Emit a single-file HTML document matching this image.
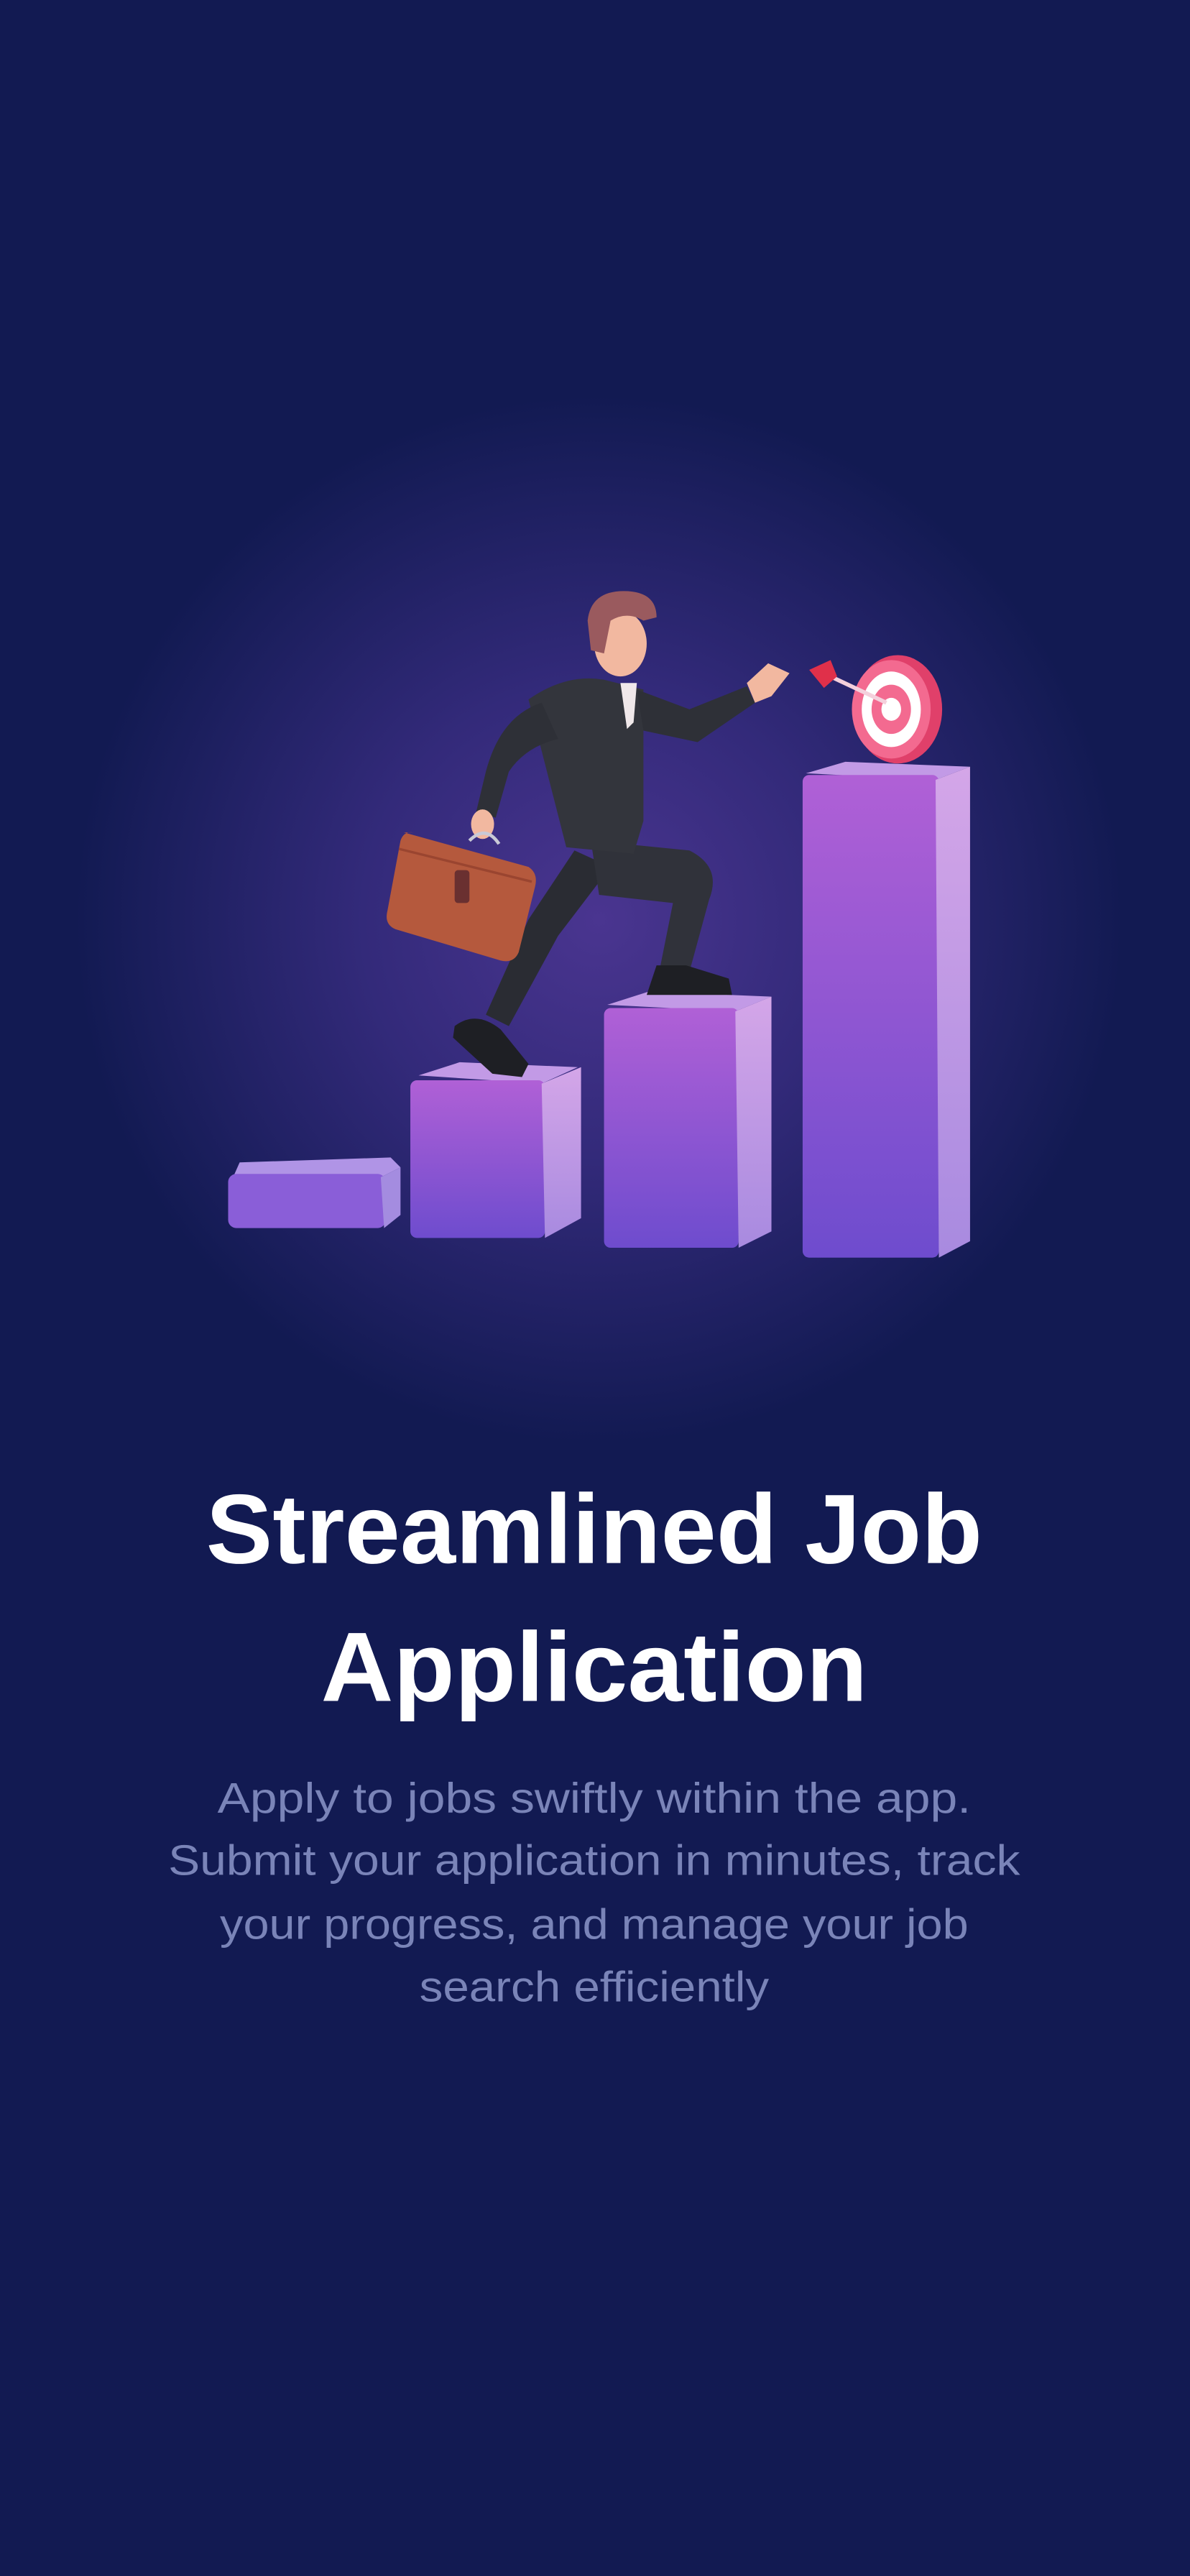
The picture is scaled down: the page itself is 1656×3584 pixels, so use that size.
<!DOCTYPE html>
<html><head><meta charset="utf-8"><style>
html,body{margin:0;padding:0;background:#121a52;}
svg{display:block}
</style></head><body>
<svg width="1656" height="3584" viewBox="0 0 725 1569" xmlns="http://www.w3.org/2000/svg">
<defs>
<radialGradient id="glow" cx="365" cy="560" r="320" gradientUnits="userSpaceOnUse">
<stop offset="0" stop-color="#4a3590"/>
<stop offset="0.45" stop-color="#332a7a"/>
<stop offset="1" stop-color="#121a52"/>
</radialGradient>
<linearGradient id="front" x1="0" y1="0" x2="0" y2="1">
<stop offset="0" stop-color="#b060d6"/><stop offset="1" stop-color="#6e4cce"/>
</linearGradient>
<linearGradient id="side" x1="0" y1="0" x2="0" y2="1">
<stop offset="0" stop-color="#d4a6e8"/><stop offset="1" stop-color="#a88ae0"/>
</linearGradient>
</defs>
<rect width="725" height="1569" fill="#121a52"/>
<circle cx="365" cy="560" r="320" fill="url(#glow)"/>
<!-- bar1 -->
<path d="M146 708 L238 705 L244 711 L232 717 L142 717 Z" fill="#b094e6"/>
<rect x="139" y="715" width="96" height="33" rx="5" fill="#8a5ed8"/>
<path d="M232 717 L244 711 L244 740 L234 748 Z" fill="#a48ce0"/>
<!-- bar2 -->
<path d="M255 655 L280 647 L352 650 L330 660 Z" fill="#c29ae6"/>
<rect x="250" y="658" width="82" height="96" rx="4" fill="url(#front)"/>
<path d="M330 660 L354 650 L354 742 L332 754 Z" fill="url(#side)"/>
<!-- bar3 -->
<path d="M370 612 L395 604 L470 607 L448 616 Z" fill="#c29ae6"/>
<rect x="368" y="614" width="82" height="146" rx="4" fill="url(#front)"/>
<path d="M448 616 L470 607 L470 750 L450 760 Z" fill="url(#side)"/>
<!-- bar4 -->
<path d="M491 471 L515 464 L591 467 L570 475 Z" fill="#c29ae6"/>
<rect x="489" y="472" width="83" height="294" rx="4" fill="url(#front)"/>
<path d="M570 475 L591 467 L591 756 L572 766 Z" fill="url(#side)"/>
<!-- target -->
<ellipse cx="547" cy="432" rx="27" ry="33" fill="#e0406a"/>
<ellipse cx="543" cy="432" rx="24" ry="30" fill="#f36a90"/>
<ellipse cx="543" cy="432" rx="18" ry="23" fill="#fff"/>
<ellipse cx="543" cy="432" rx="12" ry="15" fill="#f36a90"/>
<ellipse cx="543" cy="432" rx="6" ry="7" fill="#fff"/>
<line x1="506" y1="412" x2="540" y2="428" stroke="#f4d0dc" stroke-width="2.5"/>
<path d="M493 408 L506 402 L510 412 L502 419 Z" fill="#e0304a"/>
<!-- man: back leg -->
<path d="M350 518 L322 560 L296 618 L310 625 L340 570 L372 528 Z" fill="#2a2c33"/>
<path d="M277 625 Q290 615 305 627 L322 648 L318 656 L300 654 L276 632 Z" fill="#1e1f24"/>
<!-- front leg -->
<path d="M360 512 L420 518 Q440 528 432 548 L420 592 L402 590 L410 550 L365 545 Z" fill="#30323a"/>
<path d="M400 588 L418 588 L444 596 L446 606 L394 606 Z" fill="#1e1f24"/>
<!-- torso -->
<path d="M322 426 Q345 410 368 414 L392 420 L392 500 L386 520 L345 516 Z" fill="#33353c"/>
<!-- back arm -->
<path d="M330 428 Q305 436 296 470 L290 495 L302 498 L310 470 Q320 455 340 450 Z" fill="#2e3037"/>
<!-- front arm -->
<path d="M388 420 L420 432 L455 418 L460 428 L425 452 L392 445 Z" fill="#2e3037"/>
<path d="M455 416 L468 404 L481 410 L470 424 L460 428 Z" fill="#f2b8a0"/>
<!-- shirt/tie -->
<path d="M378 416 L388 416 L386 440 L382 444 Z" fill="#f0e8ea"/>
<!-- head -->
<ellipse cx="378" cy="392" rx="16" ry="20" fill="#f2b8a0"/>
<path d="M358 378 Q360 360 380 360 Q400 360 400 376 L392 378 Q382 372 372 378 L368 398 L360 396 Z" fill="#9a5a5e"/>
<!-- hand holding briefcase -->
<ellipse cx="294" cy="502" rx="7" ry="9" fill="#f2b8a0"/>
<!-- briefcase -->
<path d="M286 512 Q296 502 304 514" fill="none" stroke="#c9c9d6" stroke-width="2"/>
<path d="M246 507 L322 528 Q328 532 326 540 L316 580 Q313 587 305 585 L241 566 Q234 563 236 555 L244 512 Q246 506 252 507 Z" fill="#b5593d"/>
<path d="M243 517 L324 537" stroke="#9a4530" stroke-width="1.5" fill="none"/>
<rect x="277" y="530" width="9" height="20" rx="2" fill="#6a3030"/>
<!-- text -->
<text x="362" y="952" text-anchor="middle" font-family="Liberation Sans, sans-serif" font-weight="700" font-size="60" fill="#ffffff" textLength="473" lengthAdjust="spacingAndGlyphs">Streamlined Job</text>
<text x="362" y="1036" text-anchor="middle" font-family="Liberation Sans, sans-serif" font-weight="700" font-size="60" fill="#ffffff" textLength="333" lengthAdjust="spacingAndGlyphs">Application</text>
<g font-family="Liberation Sans, sans-serif" font-size="26" fill="#7a84b8" text-anchor="middle">
<text x="362" y="1104" textLength="459" lengthAdjust="spacingAndGlyphs">Apply to jobs swiftly within the app.</text>
<text x="362" y="1142" textLength="519" lengthAdjust="spacingAndGlyphs">Submit your application in minutes, track</text>
<text x="362" y="1181" textLength="456" lengthAdjust="spacingAndGlyphs">your progress, and manage your job</text>
<text x="362" y="1219" textLength="213" lengthAdjust="spacingAndGlyphs">search efficiently</text>
</g>
</svg>
</body></html>
